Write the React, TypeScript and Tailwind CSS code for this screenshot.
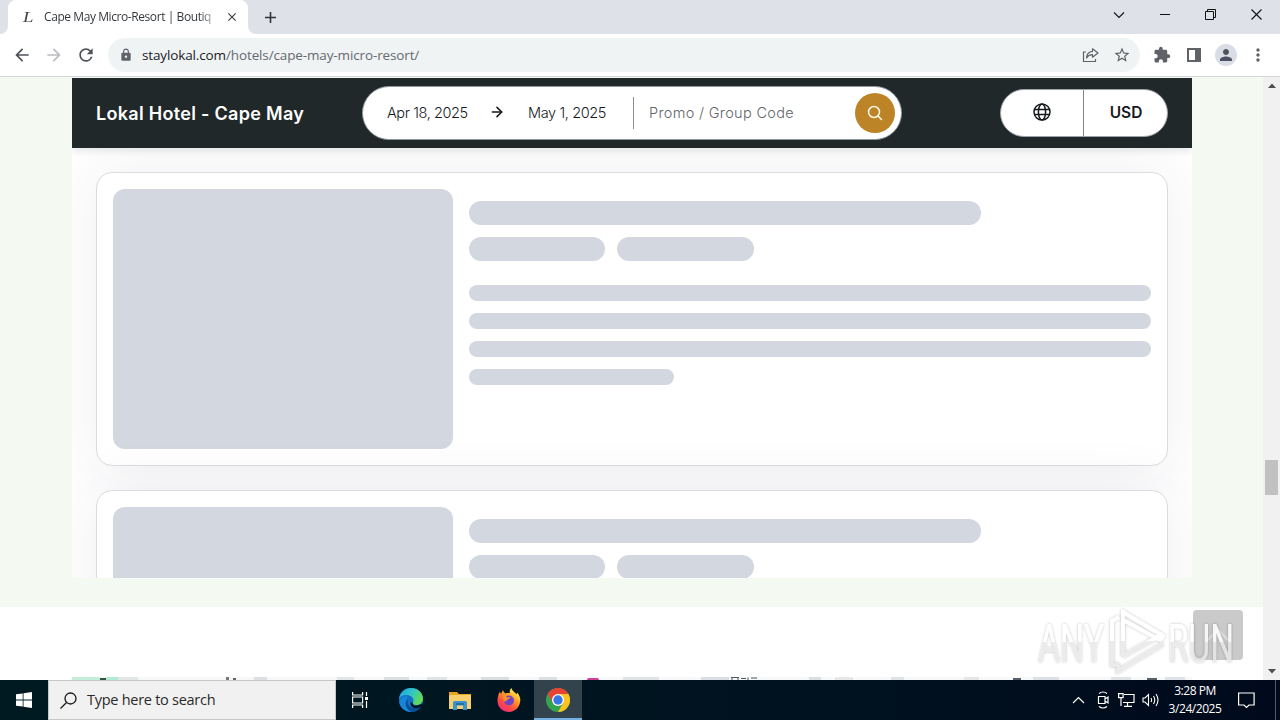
import React from 'react';
import { ArrowRight } from 'lucide-react';
import { MdArrowBack, MdArrowForward, MdRefresh, MdLock, MdStarBorder, MdExtension, MdPerson, MdMoreVert, MdAdd, MdClose } from 'react-icons/md';

const TabStrip: React.FC = () => (
  <div className="h-[34px] shrink-0 flex bg-[#dee1e8]">
    <div className="w-2 bg-white">
      <div className="h-full bg-[#dee1e8] rounded-br-lg" />
    </div>
    <div className="w-[240px] h-full bg-white rounded-t-lg flex items-center pl-[15px] pr-[8px]">
      <span className="w-[21px] font-['Liberation_Serif'] italic text-[15px] text-[#444]">
        <span className="inline-block scale-x-125 origin-left">L</span>
      </span>
      <span className="w-[172px] whitespace-nowrap font-['Open_Sans'] text-[12px] tracking-[-0.42px] bg-linear-to-r from-[#303438] from-90% to-[#d8d9da] bg-clip-text text-transparent">
        Cape May Micro-Resort | Boutiq
      </span>
      <MdClose className="ml-[9px] shrink-0 text-[#3c4043]" size={14} />
    </div>
    <div className="w-2 bg-white">
      <div className="h-full bg-[#dee1e8] rounded-bl-lg" />
    </div>
    <div className="w-[28px] flex items-center justify-center">
      <MdAdd className="text-[#303338]" size={19} />
    </div>
    <div className="ml-auto flex text-[#111]">
      <div className="w-[46px] h-[29px] flex items-center justify-center">
        <svg width="12" height="8" viewBox="0 0 12 8" fill="none" stroke="currentColor" strokeWidth="1.1">
          <path d="M1 1.500l5 5 5-5" />
        </svg>
      </div>
      <div className="w-[46px] h-[29px] flex items-center justify-center">
        <div className="w-[10px] h-px bg-[#111]" />
      </div>
      <div className="w-[45px] h-[29px] flex items-center justify-center">
        <svg width="11" height="11" viewBox="0 0 11 11" fill="none" stroke="currentColor">
          <path d="M.5 2.500h8v8h-8zM2.500 2.500v-2h8v8h-2" />
        </svg>
      </div>
      <div className="w-[47px] h-[29px] flex items-center justify-center">
        <svg width="11" height="11" viewBox="0 0 11 11" fill="none" stroke="currentColor" strokeWidth="1.1">
          <path d="M.5.5l10 10M10.500.5l-10 10" />
        </svg>
      </div>
    </div>
  </div>
);

const Toolbar: React.FC = () => (
  <div className="h-[43px] shrink-0 flex items-center bg-white border-b border-[#d5d8db] text-[#5f6368] pl-3">
    <MdArrowBack size={20} className="mr-3 text-[#4f5358]" />
    <MdArrowForward size={20} className="mr-3 text-[#bbbdc0]" />
    <MdRefresh size={20} className="mr-3 text-[#4f5358]" />
    <div className="w-[1032px] h-[34px] rounded-full bg-[#f0f3f4] flex items-center pl-[11px] pr-[9px]">
      <MdLock size={14} />
      <span className="ml-[9px] font-['Open_Sans'] text-[13.5px] tracking-[-0.13px] text-[#666a6f]">
        <span className="text-[#202124]">staylokal.com</span>/hotels/cape-may-micro-resort/
      </span>
      <svg className="ml-auto mr-[14px]" width="17" height="16" viewBox="0 0 17 16" fill="none" stroke="currentColor" strokeWidth="1.2">
        <path d="M4 5H1.500v9.500h12V12" />
        <path d="M10.500 1.800L16 6l-5.500 4.200V7.700C7.800 7.600 5.900 8.800 4.500 11c.3-3.700 2.600-6.300 6-6.600z" strokeLinejoin="round" />
      </svg>
      <MdStarBorder size={18} />
    </div>
    <MdExtension size={18} className="ml-[13px]" />
    <svg className="ml-[16px]" width="14" height="14" viewBox="0 0 14 14" fill="none" stroke="currentColor" strokeWidth="2">
      <path d="M1 1h12v12H1z" />
      <path d="M10.500 1v12" strokeWidth="5" />
    </svg>
    <div className="ml-[14px] w-[22px] h-[22px] rounded-full bg-[#dadce6] flex items-center justify-center">
      <MdPerson size={18} className="text-[#4d5160]" />
    </div>
    <MdMoreVert size={20} className="ml-[11px]" />
  </div>
);

const BookingBar: React.FC = () => (
  <div className="relative z-10 h-[70px] shrink-0 bg-[#212829] flex items-center px-6 shadow-[0_3px_8px_rgba(33,60,50,0.12)] font-['Inter']">
    <h1 className="w-[266px] text-[18px] font-semibold tracking-[0.3px] text-white whitespace-nowrap">
      Lokal Hotel - Cape May
    </h1>
    <div className="w-[540px] h-[54px] rounded-full bg-white border border-[#8f979f] flex items-center pl-6 pr-[6px] text-[14.5px] text-[#16191d]">
      <span className="w-[102px] whitespace-nowrap tracking-[-0.4px] font-light">Apr 18, 2025</span>
      <ArrowRight size={16} strokeWidth={2.4} className="mr-[23px] mb-0.5" />
      <span className="w-[105px] whitespace-nowrap tracking-[-0.38px] font-light">May 1, 2025</span>
      <div className="w-px h-8 bg-[#8c9197]" />
      <span className="ml-[15px] font-light tracking-[0.33px] text-[#62666b]">Promo / Group Code</span>
      <div className="ml-auto w-10 h-10 rounded-full bg-[#bc8427] flex items-center justify-center">
        <svg width="16" height="16" viewBox="0 0 16 16" fill="none" stroke="#fff8e6" strokeWidth="1.5" strokeLinecap="round">
          <circle cx="7" cy="7" r="5.500" />
          <path d="M11 11l3.500 3.500" />
        </svg>
      </div>
    </div>
    <div className="ml-auto w-[168px] h-12 rounded-full bg-white border border-[#9aa1a8] flex overflow-hidden text-[#16191d]">
      <div className="w-[83px] flex items-center justify-center border-r border-[#80868b]">
        <svg className="mb-0.5" width="18" height="18" viewBox="0 0 18 18" fill="none" stroke="currentColor" strokeWidth="1.5">
          <circle cx="9" cy="9" r="8" />
          <ellipse cx="9" cy="9" rx="3.600" ry="8" />
          <path d="M1.500 6.500h15M1.500 11.500h15" />
        </svg>
      </div>
      <div className="flex-1 flex items-center justify-center pl-px text-[15.500px] font-semibold">USD</div>
    </div>
  </div>
);

const SkeletonCard: React.FC = () => (
  <div className="h-[294px] shrink-0 rounded-2xl border border-[#dadce1] bg-white p-4 flex gap-4 shadow-[0_0_60px_rgba(50,50,93,0.08)]">
    <div className="w-[340px] h-[260px] rounded-xl bg-[#d2d7e0]" />
    <div className="w-[682px] pt-3">
      <div className="w-[512px] h-6 rounded-full bg-[#d2d7e0]" />
      <div className="mt-3 flex gap-3">
        <div className="w-[136px] h-6 rounded-full bg-[#d2d7e0]" />
        <div className="w-[137px] h-6 rounded-full bg-[#d2d7e0]" />
      </div>
      <div className="mt-6 flex flex-col gap-3">
        <div className="h-4 rounded-full bg-[#d2d7e0]" />
        <div className="h-4 rounded-full bg-[#d2d7e0]" />
        <div className="h-4 rounded-full bg-[#d2d7e0]" />
        <div className="w-[205px] h-4 rounded-full bg-[#d2d7e0]" />
      </div>
    </div>
  </div>
);

const Scrollbar: React.FC = () => (
  <div className="w-[17px] shrink-0 bg-[#f1f1f1] flex flex-col items-center">
    <svg className="mt-[6px]" width="8" height="5" viewBox="0 0 8 5"><path d="M0 5l4-4.500L8 5z" fill="#505050" /></svg>
    <div className="mt-[372px] w-[13px] h-[35px] bg-[#c1c1c1]" />
    <svg className="mt-auto mb-[6px]" width="8" height="5" viewBox="0 0 8 5"><path d="M0 0l4 4.500L8 0z" fill="#505050" /></svg>
  </div>
);

// top edge of the map that follows the booking section
const MapEdge: React.FC = () => (
  <div className="mt-auto ml-[72px] w-[1120px] h-[3px] flex bg-[#f7f8f9] overflow-hidden">
    <div className="w-[28px] bg-[#c4edda]" />
    <div className="w-[6px] mt-px bg-[#385246]" />
    <div className="w-[12px] bg-[#b2ead2]" />
    <div className="w-[20px] bg-[#e0e7e4]" />
    <div className="ml-[88px] w-[3px] bg-[#777]" />
    <div className="ml-[4px] w-[3px] mt-px bg-[#666]" />
    <div className="ml-[18px] w-[13px] bg-[#dce0e3]" />
    <div className="ml-[70px] w-[17px] bg-[#e2e5e8]" />
    <div className="ml-[30px] w-[25px] bg-[#dcdfe2]" />
    <div className="ml-[18px] w-[20px] bg-[#e1e4e7]" />
    <div className="ml-[34px] w-[28px] bg-[#dadee2]" />
    <div className="ml-[30px] w-[18px] bg-[#dcdfe3]" />
    <div className="ml-[30px] w-[12px] mt-px rounded-t-full bg-[#cf3f97]" />
    <div className="ml-[24px] w-[36px] bg-[#dfe3e5]" />
    <div className="ml-[42px] w-[28px] bg-[#dadee4]" />
    <svg width="30" height="3" viewBox="0 0 30 3" stroke="#4c5661" fill="none">
      <path d="M2 .5h8M3 1v2M9 1v2M12 1.500h5M19 .5v2.500M22 1h6" />
    </svg>
    <div className="ml-[50px] w-[12px] bg-[#dcdfe2]" />
    <div className="ml-[14px] w-[18px] bg-[#e5e7e9]" />
    <div className="ml-[38px] w-[13px] bg-[#dfe3e6]" />
    <div className="ml-[60px] w-[15px] bg-[#e4e6e8]" />
    <div className="ml-[34px] w-[8px] mt-px bg-[#56606a]" />
    <div className="ml-[12px] w-[26px] bg-[#dce0e6]" />
    <div className="ml-[52px] w-[20px] bg-[#dfe2e7]" />
    <div className="ml-[16px] w-[10px] mt-px bg-[#56606a]" />
    <div className="ml-[8px] w-[20px] bg-[#dfe2e9]" />
  </div>
);

const Watermark: React.FC = () => (
  <svg className="absolute left-[1032px] top-[528px]" width="228" height="74" viewBox="0 0 228 74">
    <defs>
      <linearGradient id="wm" gradientUnits="userSpaceOnUse" x1="0" y1="18" x2="0" y2="56">
        <stop offset="0.5" stopColor="#fff" />
        <stop offset="0.5" stopColor="#e8e8e8" />
      </linearGradient>
      <linearGradient id="wmLogo" gradientUnits="userSpaceOnUse" x1="0" y1="5" x2="0" y2="67">
        <stop offset="0.5" stopColor="#fff" />
        <stop offset="0.5" stopColor="#e8e8e8" />
      </linearGradient>
      <filter id="wmShadow" x="-10%" y="-20%" width="120%" height="140%">
        <feDropShadow dx="0" dy="0" stdDeviation="1.8" floodColor="#000" floodOpacity="0.3" />
      </filter>
    </defs>
    <g filter="url(#wmShadow)" opacity="0.85" fill="url(#wm)" fontFamily="Roboto" fontWeight="400" fontSize="53">
      <text x="6" y="57" textLength="66" lengthAdjust="spacingAndGlyphs">ANY</text>
      <text x="136" y="57" textLength="66" lengthAdjust="spacingAndGlyphs">RUN</text>
    </g>
    <g filter="url(#wmShadow)" fill="none" stroke="url(#wmLogo)" strokeWidth="4" opacity="0.85">
      <path d="M87 12l-7 4v44h7" />
      <path d="M91 51V7l40 24-3 4-37-20M91 51l40-22M86 60v6l45-27" />
    </g>
  </svg>
);

const PageView: React.FC = () => (
  <div className="relative flex-1 min-h-0 flex">
    <div className="flex-1 min-w-0 flex flex-col bg-white">
      <div className="h-[530px] shrink-0 bg-[#f4f9f2] pt-px pl-[72px]">
        <div className="w-[1120px] h-[500px] bg-white overflow-hidden flex flex-col">
          <BookingBar />
          <div className="flex flex-col gap-6 p-6">
            <SkeletonCard />
            <SkeletonCard />
          </div>
        </div>
      </div>
      <MapEdge />
    </div>
    <Scrollbar />
    <div className="absolute left-[1193px] top-[533px] w-[50px] h-[50px] rounded bg-[#cacaca] flex items-center justify-center">
      <svg width="24" height="14" viewBox="0 0 24 14" fill="none" stroke="#dedede" strokeWidth="2">
        <path d="M2 12L12 2l10 10" />
      </svg>
    </div>
    <Watermark />
  </div>
);

const EdgeIcon: React.FC = () => (
  <svg width="24" height="24" viewBox="0 0 24 24">
    <defs>
      <linearGradient id="edgeTop" x1="0" y1="0" x2="1" y2="0.4">
        <stop offset="0.1" stopColor="#1ba8e8" />
        <stop offset="0.6" stopColor="#35c8c0" />
        <stop offset="1" stopColor="#62d957" />
      </linearGradient>
    </defs>
    <circle cx="12" cy="12" r="12" fill="#1470c6" />
    <path d="M0 11C.7 4.500 5.800 0 12 0c7 0 12 5 12 10.500 0 4-3 6.500-6.500 6.500-3 0-4-1.200-3.800-2 1.500-1.500 1.300-5-2.200-7C7.500 5.800 2 7 0 11z" fill="url(#edgeTop)" />
    <path d="M8.500 10C4.500 15 8 23 15 23.600 9 25 2 21.500.5 15 .3 11 4 7.500 8.500 8.200z" fill="#1686d9" />
    <path d="M9 11c-2.500 7 5 12 13 6.500C19.500 22 16 24 12.500 24 6 21 5 13.500 9 11z" fill="#0c4f96" />
    <path d="M13.700 15c-.3 3 4.500 3.500 8.800.8L24 19h-2c-5 2.500-11 1-10.500-5z" fill="#001722" />
  </svg>
);

const ExplorerIcon: React.FC = () => (
  <svg width="22" height="19" viewBox="0 0 22 19">
    <path d="M0 1h8l2 2h12v15H0z" fill="#e8a51e" />
    <path d="M1 4h21v14H0V5z" fill="#f6cf6e" />
    <path d="M4 11.500q0-1.500 1.500-1.500h11q1.500 0 1.500 1.500V19h-4v-4.500H8V19H4z" fill="#3c93d2" />
    <path d="M7 12h8v2H7z" fill="#276f9e" />
  </svg>
);

const FirefoxIcon: React.FC = () => (
  <svg width="24" height="24" viewBox="0 0 24 24">
    <defs>
      <linearGradient id="fox" x1="0.85" y1="0" x2="0.2" y2="1">
        <stop offset="0.1" stopColor="#fff04a" />
        <stop offset="0.4" stopColor="#ff9b28" />
        <stop offset="0.7" stopColor="#ff4b43" />
        <stop offset="1" stopColor="#ee2685" />
      </linearGradient>
    </defs>
    <path d="M3 3.500c0 1 .5 1.800 1 2.200L6 2c.3 1.400 1.200 2.600 2.600 3.400C10 4.800 12 5 13 5.200 12.200 3.500 13 1.200 14.500 0c.5 3 3.500 4 5 6.500l.5-2c2 2 3.500 5 3.300 8C23 19 18 24 12 24S.5 19.500.5 13C.5 9 1.500 5.500 3 3.500z" fill="url(#fox)" />
    <circle cx="12" cy="12.500" r="5" fill="#7044c6" />
    <path d="M5.500 8.500c2-1 4-.5 5 1l3-.5c0 1.500-2 2-3 2.500-.5 1.500-2 1-2.500 2.500C7 12 5 11 5.500 8.500z" fill="#ff8e2d" />
  </svg>
);

const ChromeIcon: React.FC = () => (
  <svg width="24" height="24" viewBox="0 0 24 24">
    <circle cx="12" cy="12" r="12" fill="#34a34f" />
    <path d="M12 12L1.600 6A12 12 0 0 1 22.400 6z" fill="#e94335" />
    <path d="M12 6h10.400A12 12 0 0 1 12 24l5.200-9z" fill="#fcc31e" />
    <path d="M1.600 6L6.800 15 12 6z" fill="#e94335" />
    <circle cx="12" cy="12" r="6" fill="#fff" />
    <circle cx="12" cy="12" r="4.700" fill="#3577e5" />
  </svg>
);

const Taskbar: React.FC = () => (
  <div className="h-10 shrink-0 flex bg-linear-to-r from-[#001a22] via-[#001420] to-[#000a1c] text-white font-['Open_Sans']">
    <div className="w-12 flex items-center justify-center">
      <svg width="16" height="16" viewBox="0 0 16 16" fill="#fff">
        <path d="M0 2.300l6.700-.9v6.200H0zM7.500 1.300L16 .1v7.500H7.500zM0 8.400h6.700v6.200L0 13.700zM7.500 8.400H16v7.500l-8.500-1.200z" />
      </svg>
    </div>
    <div className="w-[288px] bg-[#f1f1f1] border border-[#c4c6c7] flex items-center pl-[11px] text-[#2b2b2b]">
      <svg width="17" height="17" viewBox="0 0 17 17" fill="none" stroke="#1a1a1a" strokeWidth="1.300">
        <circle cx="10.500" cy="6.500" r="5.500" />
        <path d="M6.500 10.500L.5 16.500" />
      </svg>
      <span className="ml-[10px] text-[14.5px] tracking-[-0.27px]">Type here to search</span>
    </div>
    <div className="w-12 flex items-center justify-center">
      <svg width="17" height="16" viewBox="0 0 17 16" fill="none" stroke="#fff" strokeWidth="1.200">
        <path d="M.6 0v3h10V0M.6 16v-3h10v3M.6 5h10v6H.6zM14.500 0v4M14.500 9v7" />
        <path d="M13 5h3v3h-3z" fill="#fff" stroke="none" />
      </svg>
    </div>
    <div className="ml-[3px] w-12 flex items-center justify-center"><EdgeIcon /></div>
    <div className="ml-px w-12 flex items-center justify-center"><ExplorerIcon /></div>
    <div className="ml-px w-12 flex items-center justify-center"><FirefoxIcon /></div>
    <div className="ml-px w-12 pt-0.5 flex items-center justify-center bg-[#33434d] border-b-2 border-[#76b0e3]"><ChromeIcon /></div>
    <div className="ml-auto flex items-center">
      <svg width="13" height="8" viewBox="0 0 13 8" fill="none" stroke="#fff" strokeWidth="1.200"><path d="M1 7l5.500-5.500L12 7" /></svg>
      <svg className="ml-[12px]" width="13" height="18" viewBox="0 0 13 18" fill="none" stroke="#fff" strokeWidth="1.200">
        <path d="M1.500 5.500h6.500v7H1.500zM8 8l3-2v6l-3-2M2 2.500q4-3 8 0M2 15.500q4 3 8 0" />
      </svg>
      <svg className="ml-[8px]" width="17" height="14" viewBox="0 0 17 14" fill="none" stroke="#fff" strokeWidth="1.200">
        <path d="M6 1.500h10v8H5M9.500 10v3M6 13.300h8M.6.6h4.500v4H.6zM3 5v8" />
      </svg>
      <svg className="ml-[7px]" width="18" height="14" viewBox="0 0 18 14" fill="none" stroke="#fff" strokeWidth="1.100">
        <path d="M1 5h2l3.500-3.500v11L3 9H1zM9 5q1.200 2 0 4M11.500 3q2.500 4 0 8M14 1q4 6 0 12" />
      </svg>
      <div className="ml-[7px] w-[56px] flex flex-col items-center text-[12px] leading-[18px] tracking-[-0.45px] whitespace-nowrap">
        <span>3:28 PM</span>
        <span>3/24/2025</span>
      </div>
      <svg className="ml-[15px]" width="17" height="17" viewBox="0 0 17 17" fill="none" stroke="#fff" strokeWidth="1.200">
        <path d="M.6 1h15.500v12H11l-2.500 2.500L6 13H.6z" />
      </svg>
      <div className="ml-[20px] mr-[4px] w-px h-10 bg-[#535b69]" />
    </div>
  </div>
);

const App: React.FC = () => {
  return (
    <div className="w-[1280px] h-[720px] overflow-hidden flex flex-col bg-white">
      <TabStrip />
      <Toolbar />
      <PageView />
      <Taskbar />
    </div>
  );
};

export default App;
